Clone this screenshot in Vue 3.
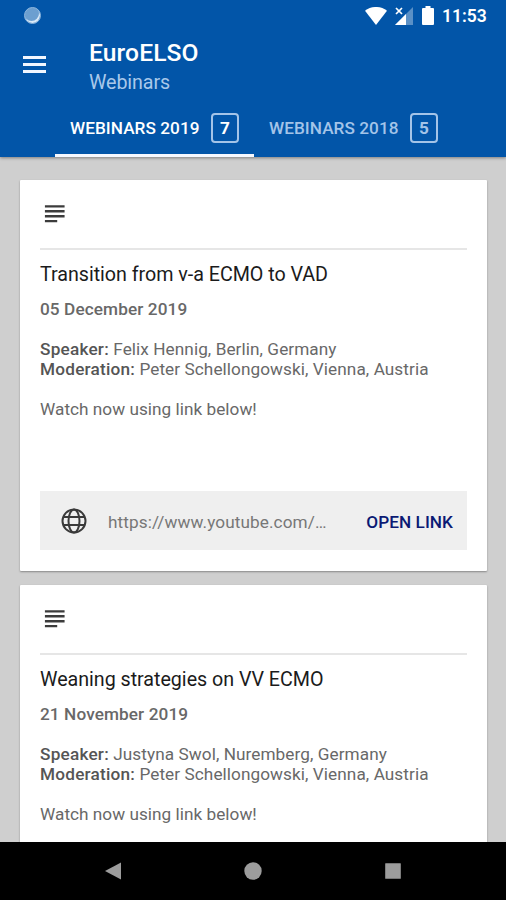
<script setup>
const tabs = [
  { label: 'WEBINARS 2019', count: 7, active: true },
  { label: 'WEBINARS 2018', count: 5, active: false },
]
const webinars = [
  {
    title: 'Transition from v-a ECMO to VAD',
    date: '05 December 2019',
    speaker: 'Felix Hennig, Berlin, Germany',
    moderation: 'Peter Schellongowski, Vienna, Austria',
    link: 'https://www.youtube.com/…',
  },
  {
    title: 'Weaning strategies on VV ECMO',
    date: '21 November 2019',
    speaker: 'Justyna Swol, Nuremberg, Germany',
    moderation: 'Peter Schellongowski, Vienna, Austria',
    link: '',
  },
]
</script>

<template>
  <div class="screen">
    <header class="header">
      <div class="status">
        <span class="sync"></span>
        <svg class="wifi" viewBox="0 0 22 18"><path d="M0 3.800C6-1.300 16-1.300 22 3.800L11 18Z" fill="#fff" /></svg>
        <svg class="signal" viewBox="0 0 18 18">
          <path d="M18 0V18H0Z" fill="#fff" opacity=".35" />
          <path d="M11 7V18H0Z" fill="#fff" />
          <path d="M1 1L7 7M7 1L1 7" stroke="#fff" stroke-width="1.700" />
        </svg>
        <svg class="battery" viewBox="0 0 12 19"><path d="M3.500 0h5v2H11a1 1 0 0 1 1 1v15a1 1 0 0 1-1 1H1a1 1 0 0 1-1-1V3a1 1 0 0 1 1-1h2.500Z" fill="#fff" /></svg>
        <span class="time">11:53</span>
      </div>
      <div class="toolbar">
        <div class="menu"><i></i><i></i><i></i></div>
        <div class="heading">
          <div class="app-title">EuroELSO</div>
          <div class="app-sub">Webinars</div>
        </div>
      </div>
      <nav class="tabs">
        <div v-for="t in tabs" :key="t.label" class="tab" :class="{ active: t.active }">
          <span class="tab-label">{{ t.label }}</span>
          <span class="count">{{ t.count }}</span>
        </div>
      </nav>
    </header>

    <main class="list">
      <article v-for="w in webinars" :key="w.title" class="card">
        <div class="card-top">
          <svg class="subject" viewBox="0 0 24 24"><path d="M14 17H4v2h10v-2zm6-8H4v2h16V9zM4 15h16v-2H4v2zM4 5v2h16V5H4z" fill="#3c3c3c" /></svg>
        </div>
        <h2 class="title">{{ w.title }}</h2>
        <div class="date">{{ w.date }}</div>
        <div class="details">
          <div class="line"><b>Speaker:</b> {{ w.speaker }}</div>
          <div class="line"><b>Moderation:</b> {{ w.moderation }}</div>
        </div>
        <div class="watch">Watch now using link below!</div>
        <div v-if="w.link" class="link">
          <svg class="globe" viewBox="0 0 26 26" fill="none" stroke="#3a3a3a" stroke-width="2">
            <circle cx="13" cy="13" r="11.500" />
            <ellipse cx="13" cy="13" rx="5.500" ry="11.500" />
            <path d="M2.500 9H23.500M2.500 17H23.500" />
          </svg>
          <span class="url">{{ w.link }}</span>
          <span class="open">OPEN LINK</span>
        </div>
      </article>
    </main>

    <footer class="navbar">
      <svg viewBox="0 0 18 18"><path d="M17 .5V17.500L1 9Z" fill="#9c9c9c" /></svg>
      <svg viewBox="0 0 18 18"><circle cx="9" cy="9" r="8.700" fill="#9c9c9c" /></svg>
      <svg viewBox="0 0 18 18"><rect x="1.200" y="1.200" width="15.600" height="15.600" rx=".5" fill="#9c9c9c" /></svg>
    </footer>
  </div>
</template>

<style>
body { margin: 0; overflow: hidden; }
</style>

<style scoped>
.screen {
  width: 506px;
  height: 900px;
  display: flex;
  flex-direction: column;
  overflow: hidden;
  background: #cfcfcf;
  font-family: Roboto, sans-serif;
  color: #686868;
}
svg { display: block; flex: none; }
.header {
  flex: none;
  height: 157px;
  background: #0255a8;
  color: #fff;
  box-shadow: 0 1px 3px rgba(0, 0, 0, 0.4);
  z-index: 1;
}
.status {
  height: 30px;
  display: flex;
  align-items: center;
  padding: 1px 19px 0 24px;
  box-sizing: border-box;
}
.sync {
  width: 17px;
  height: 17px;
  box-sizing: border-box;
  border-radius: 50%;
  background: #6c9fd0;
  border: 1px solid #8db6de;
  box-shadow: inset -1px -2px 0 #d9e9f7;
  margin-right: auto;
}
.wifi { width: 22px; height: 18px; }
.signal { width: 18px; height: 18px; margin-left: 8px; }
.battery { width: 12px; height: 19px; margin-left: 9px; }
.time {
  width: 45px;
  margin-left: 8px;
  font-size: 17.5px;
  font-weight: 600;
  line-height: 20px;
}
.toolbar {
  height: 70px;
  display: flex;
  padding-left: 23px;
}
.menu {
  width: 23px;
  display: flex;
  flex-direction: column;
  gap: 4px;
  padding-top: 26px;
}
.menu i { height: 3px; background: #f1f6ff; }
.heading { padding: 8px 0 0 43px; }
.app-title { font-size: 24.6px; line-height: 29px; font-weight: 500; letter-spacing: 0.12px; }
.app-sub { font-size: 19.7px; line-height: 24px; margin-top: 4px; color: #a9c8ea; letter-spacing: -0.1px; }
.tabs { display: flex; height: 57px; padding-left: 55px; }
.tab {
  box-sizing: border-box;
  width: 199px;
  display: flex;
  align-items: center;
  padding: 2px 15px 0;
  border-bottom: 3px solid transparent;
  color: #a4c4e8;
  font-size: 17.2px;
  font-weight: 500;
}
.tab.active { color: #fff; border-bottom-color: #f5f8ff; }
.tab-label { width: 141px; white-space: nowrap; letter-spacing: 0.05px; }
.count {
  box-sizing: border-box;
  width: 28px;
  height: 30px;
  line-height: 27px;
  text-align: center;
  border: 2px solid #a4c4e8;
  border-radius: 4px;
  font-weight: 700;
}
.list {
  flex: 1;
  min-height: 0;
  overflow: hidden;
  display: flex;
  flex-direction: column;
  gap: 14px;
  padding: 23px 19px 0 20px;
}
.card {
  flex: none;
  box-sizing: border-box;
  height: 391px;
  padding: 0 20px;
  background: #fff;
  border-radius: 1px;
  box-shadow: 0 1px 2px rgba(0, 0, 0, 0.35);
}
.card-top {
  height: 70px;
  box-sizing: border-box;
  padding-top: 19px;
  border-bottom: 2px solid #e6e6e6;
}
.subject { width: 29.5px; height: 29.5px; }
.title {
  margin: 13px 0 0;
  font-size: 19.7px;
  line-height: 24px;
  font-weight: 400;
  color: #1b1b1b;
  white-space: nowrap;
  letter-spacing: -0.03px;
}
.date { margin-top: 12px; font-size: 17.2px; line-height: 20px; font-weight: 500; letter-spacing: 0.1px; }
.details { margin-top: 20px; }
.line, .watch { font-size: 17.2px; line-height: 20px; white-space: nowrap; }
.line { letter-spacing: 0.07px; }
.line b { font-weight: 500; color: #555; letter-spacing: 0.22px; }
.watch { margin-top: 20px; letter-spacing: 0.03px; }
.link {
  box-sizing: border-box;
  margin-top: 72px;
  height: 59px;
  background: #efefef;
  display: flex;
  align-items: center;
  padding: 2px 14px 0 21px;
}
.globe { width: 26px; height: 26px; margin-bottom: 1px; }
.url { margin-left: 21px; font-size: 17.2px; color: #777; white-space: nowrap; letter-spacing: 0.1px; }
.open { margin-left: auto; font-size: 17.2px; font-weight: 500; color: #0b1a74; white-space: nowrap; letter-spacing: 0.06px; }
.navbar {
  flex: none;
  height: 58px;
  background: #000;
  display: flex;
  align-items: center;
  justify-content: center;
  gap: 122px;
  z-index: 1;
}
.navbar svg { width: 18px; height: 18px; }
</style>
